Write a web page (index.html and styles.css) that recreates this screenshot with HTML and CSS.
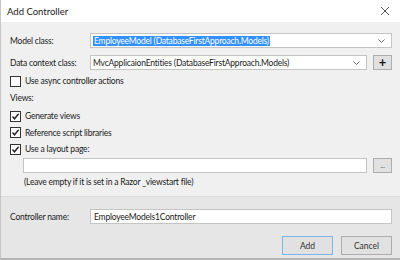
FILE: index.html
```html
<!DOCTYPE html>
<html lang="en">
<head>
    <meta charset="UTF-8">
    <title>Add Controller</title>
    <link rel="stylesheet" href="styles.css">
</head>
<body>
    <div class="dialog">
        <div class="titlebar">
            <span class="title">Add Controller</span>
            <svg class="close" width="10" height="10" viewBox="0 0 10 10"><path d="M1 1L9 9M9 1L1 9" stroke="#555" stroke-width="1"/></svg>
        </div>

        <div class="body">
            <div class="row first">
                <label class="field-label">Model class:</label>
                <div class="combo">
                    <span class="selected">EmployeeModel (DatabaseFirstApproach.Models)</span>
                    <svg class="chevron" width="7" height="4" viewBox="0 0 7 4"><path d="M0.5 0.5L3.5 3.5L6.5 0.5" stroke="#666" fill="none"/></svg>
                </div>
            </div>

            <div class="row second">
                <label class="field-label">Data context class:</label>
                <div class="combo">
                    <span>MvcApplicaionEntities (DatabaseFirstApproach.Models)</span>
                    <svg class="chevron" width="7" height="4" viewBox="0 0 7 4"><path d="M0.5 0.5L3.5 3.5L6.5 0.5" stroke="#666" fill="none"/></svg>
                </div>
                <div class="small-btn plus">+</div>
            </div>

            <div class="check-row async">
                <span class="box"></span>Use async controller actions
            </div>

            <div class="section">Views:</div>

            <div class="check-row">
                <span class="box"><svg width="9" height="9" viewBox="0 0 9 9"><path d="M1.5 4.5L3.5 6.8L7.6 1.8" stroke="#222" stroke-width="1.4" fill="none"/></svg></span>Generate views
            </div>
            <div class="check-row">
                <span class="box"><svg width="9" height="9" viewBox="0 0 9 9"><path d="M1.5 4.5L3.5 6.8L7.6 1.8" stroke="#222" stroke-width="1.4" fill="none"/></svg></span>Reference script libraries
            </div>
            <div class="check-row last">
                <span class="box"><svg width="9" height="9" viewBox="0 0 9 9"><path d="M1.5 4.5L3.5 6.8L7.6 1.8" stroke="#222" stroke-width="1.4" fill="none"/></svg></span>Use a layout page:
            </div>

            <div class="row layout-row">
                <div class="textbox"></div>
                <div class="small-btn dots">...</div>
            </div>
            <div class="hint">(Leave empty if it is set in a Razor _viewstart file)</div>
        </div>

        <div class="footer">
            <div class="row">
                <label class="field-label">Controller name:</label>
                <div class="textbox">EmployeeModels1Controller</div>
            </div>
            <div class="buttons">
                <button class="btn default">Add</button>
                <button class="btn">Cancel</button>
            </div>
        </div>
    </div>
</body>
</html>
```

FILE: styles.css
```css
body {
    margin: 0;
    font-family: Lato, "Open Sans", sans-serif;
    font-size: 8.5px;
    letter-spacing: -0.2px;
    color: #1a1a1a;
    background: #f0f0f0;
}
.dialog {
    width: 399px;
    height: 258px;
    border-left: 1px solid #c6c6c6;
    border-bottom: 2px solid #b4b4b4;
    display: flex;
    flex-direction: column;
    background: #f0f0f0;
}
.titlebar {
    height: 22px;
    flex: none;
    background: #fff;
    display: flex;
    align-items: center;
    justify-content: space-between;
    padding: 0 10px 0 6px;
}
.title {
    font-size: 9.5px;
    letter-spacing: 0;
    color: #222;
}
.body {
    box-sizing: border-box;
    height: 175px;
    flex: none;
    padding: 11px 8px 0 9px;
    border-bottom: 1px solid #dedede;
}
.row {
    display: flex;
    align-items: center;
    height: 15px;
    margin-bottom: 7px;
}
.row.second {
    margin-bottom: 5px;
}
.field-label {
    width: 80px;
    flex: none;
}
.combo, .textbox {
    flex: 1;
    height: 13px;
    background: #fff;
    border: 1px solid #c4c4c4;
    display: flex;
    align-items: center;
    padding: 0 6px 0 2px;
    white-space: nowrap;
    overflow: hidden;
}
.combo span {
    flex: 1;
}
.combo .selected {
    flex: none;
    background: #3390ff;
    color: #fff;
    padding: 0 1px;
}
.combo .selected + .chevron {
    margin-left: auto;
}
.small-btn {
    box-sizing: border-box;
    width: 19px;
    height: 15px;
    margin-left: 6px;
    border: 1px solid #adadad;
    background: #e1e1e1;
    display: flex;
    align-items: center;
    justify-content: center;
}
.plus {
    font-size: 13px;
    font-weight: bold;
    line-height: 1;
}
.dots {
    font-size: 7px;
    align-items: flex-end;
    padding-bottom: 3px;
    color: #555;
}
.check-row {
    display: flex;
    align-items: center;
    height: 12px;
    margin-bottom: 4.5px;
}
.check-row.async {
    margin-bottom: 5px;
}
.check-row.last {
    margin-bottom: 3px;
}
.box {
    width: 9px;
    height: 9px;
    border: 1px solid #333;
    background: #fff;
    margin-right: 4px;
    display: flex;
}
.section {
    height: 12px;
    line-height: 12px;
    margin-bottom: 6px;
}
.layout-row {
    margin: 0 0 3px 13px;
}
.hint {
    height: 12px;
    line-height: 12px;
    padding-left: 14px;
}
.footer {
    flex: 1;
    background: #e6e6e6;
    padding: 12px 8px 0 9px;
}
.footer .row {
    margin-bottom: 12px;
}
.textbox {
    padding-left: 3px;
}
.buttons {
    display: flex;
    justify-content: flex-end;
    gap: 8px;
}
.btn {
    width: 51px;
    height: 19px;
    font: inherit;
    color: #333;
    background: #e1e1e1;
    border: 1px solid #adadad;
    padding: 0;
}
.btn.default {
    border-color: #7eb4ea;
}
```
